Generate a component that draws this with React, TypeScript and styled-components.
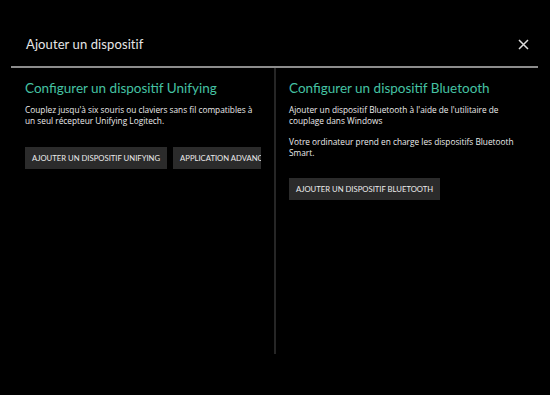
import React from "react";
import styled, { createGlobalStyle } from "styled-components";

const GlobalStyle = createGlobalStyle`
  html, body {
    margin: 0;
    padding: 0;
    background: #000;
  }
  body {
    font-family: Lato, "Open Sans", sans-serif;
    color: #e8e8e8;
  }
`;

const Dialog = styled.div`
  width: 550px;
  height: 395px;
  background: #000;
  display: flex;
  flex-direction: column;
`;

const Header = styled.header`
  height: 66px;
  box-sizing: border-box;
  padding: 22px 20px 0 26px;
  display: flex;
  align-items: center;
  justify-content: space-between;
`;

const Title = styled.h1`
  margin: 0;
  font-size: 13px;
  font-weight: 400;
  color: #e6e6e6;
  letter-spacing: 0.1px;
`;

const CloseButton = styled.button`
  width: 14px;
  height: 14px;
  padding: 0;
  border: none;
  background: none;
  color: #dcdcdc;
  display: flex;
  align-items: center;
  justify-content: center;
  cursor: pointer;
`;

const Rule = styled.div`
  height: 2px;
  margin: 0 12px 0 11px;
  background: #8c8c8c;
`;

const Columns = styled.div`
  margin: 0 12px 0 11px;
  display: grid;
  grid-template-columns: 263px 2px 1fr;
  height: 286px;
`;

const Divider = styled.div`
  background: #262626;
`;

const Column = styled.section<{ $left?: boolean }>`
  display: flex;
  flex-direction: column;
  align-items: flex-start;
  padding: 12px 13px 0 ${({ $left }) => ($left ? "14px" : "13px")};
  overflow: hidden;
`;

const Heading = styled.h2`
  margin: 0 0 8px;
  font-size: 13.5px;
  line-height: 16px;
  font-weight: 400;
  color: #45c2a3;
  white-space: nowrap;
`;

const Text = styled.p`
  margin: 0 0 10px;
  max-width: 232px;
  font-family: "Open Sans", Lato, sans-serif;
  font-size: 8.3px;
  line-height: 11px;
  color: #ececec;
`;

const ButtonRow = styled.div<{ $top: number }>`
  align-self: stretch;
  display: flex;
  gap: 6px;
  margin-top: ${({ $top }) => $top}px;
  overflow: hidden;
`;

const ActionButton = styled.button`
  flex-shrink: 0;
  height: 22px;
  padding: 0 7px;
  border: none;
  background: #2b2b2b;
  color: #ececec;
  font-family: Lato, "Open Sans", sans-serif;
  font-size: 7.7px;
  text-transform: uppercase;
  white-space: nowrap;
  cursor: pointer;
`;

export default function App() {
  return (
    <>
      <GlobalStyle />
      <Dialog>
        <Header>
          <Title>Ajouter un dispositif</Title>
          <CloseButton aria-label="Fermer">
            <svg width="11" height="11" viewBox="0 0 11 11">
              <path d="M1 1L10 10M10 1L1 10" stroke="currentColor" strokeWidth="1.5" />
            </svg>
          </CloseButton>
        </Header>
        <Rule />
        <Columns>
          <Column $left>
            <Heading>Configurer un dispositif Unifying</Heading>
            <Text>
              Couplez jusqu'à six souris ou claviers sans fil compatibles à un seul récepteur Unifying Logitech.
            </Text>
            <ButtonRow $top={11}>
              <ActionButton>Ajouter un dispositif Unifying</ActionButton>
              <ActionButton>Application advanced</ActionButton>
            </ButtonRow>
          </Column>
          <Divider />
          <Column>
            <Heading>Configurer un dispositif Bluetooth</Heading>
            <Text>
              Ajouter un dispositif Bluetooth à l'aide de l'utilitaire de couplage dans Windows
            </Text>
            <Text>
              Votre ordinateur prend en charge les dispositifs Bluetooth Smart.
            </Text>
            <ButtonRow $top={10}>
              <ActionButton>Ajouter un dispositif Bluetooth</ActionButton>
            </ButtonRow>
          </Column>
        </Columns>
      </Dialog>
    </>
  );
}
